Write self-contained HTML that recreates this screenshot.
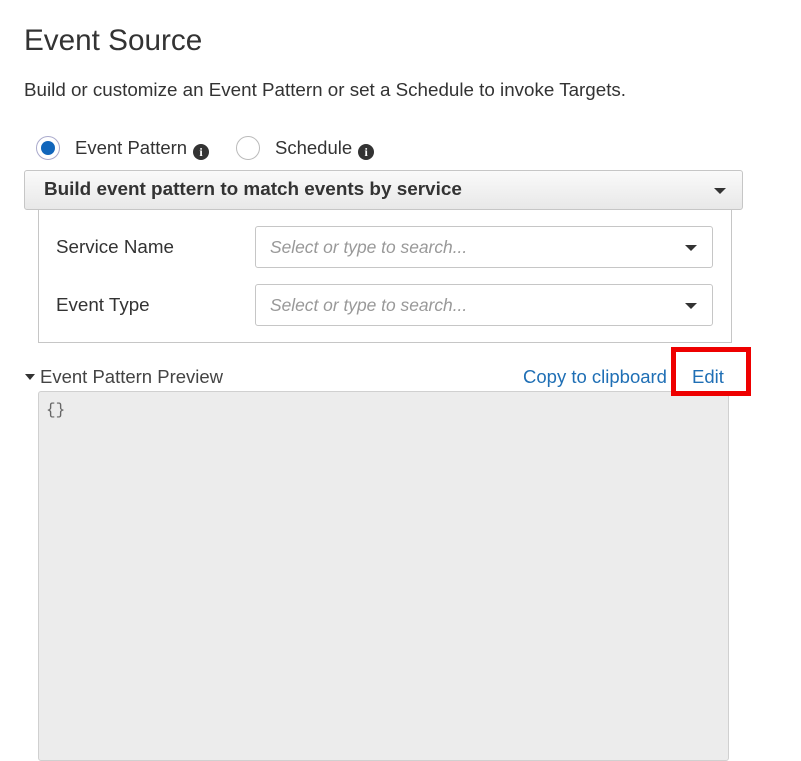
<!DOCTYPE html>
<html><head><style>
body{margin:0;width:801px;height:752px;overflow:hidden;background:#fff;font-family:"Liberation Sans",sans-serif;color:#444;position:relative}
.a{position:absolute;white-space:nowrap}
.info{display:inline-block;width:16px;height:16px;border-radius:50%;background:#333;color:#fff;font:bold 12px "Liberation Serif",serif;text-align:center;line-height:16px;vertical-align:-2px;margin-left:6px}
.radio{position:absolute;width:24px;height:24px;border-radius:50%;border:1px solid #bbb;box-sizing:border-box;background:#fff}
.sel{position:absolute;left:255px;width:458px;height:42px;border:1px solid #c6c6c6;border-radius:3px;box-sizing:border-box}
.sel span{position:absolute;left:14px;top:10px;font-style:italic;color:#999;font-size:17.4px}
.tri{position:absolute;width:0;height:0;border-left:6px solid transparent;border-right:6px solid transparent;border-top:6px solid #333}
</style></head><body>
<div class="a" style="left:24px;top:24px;font-size:29.7px;color:#333">Event Source</div>
<div class="a" style="left:24px;top:79px;font-size:18.8px;color:#333">Build or customize an Event Pattern or set a Schedule to invoke Targets.</div>
<div class="radio" style="left:36px;top:136px;border-color:#aac"><div style="position:absolute;left:4px;top:4px;width:14px;height:14px;border-radius:50%;background:#1166bb"></div></div>
<div class="a" style="left:75px;top:137px;font-size:18.5px;color:#333">Event Pattern<span class="info">i</span></div>
<div class="radio" style="left:236px;top:136px"></div>
<div class="a" style="left:275px;top:137px;font-size:18.5px;color:#333">Schedule<span class="info">i</span></div>
<div style="position:absolute;left:24px;top:170px;width:719px;height:40px;box-sizing:border-box;border:1px solid #c6c6c6;border-radius:3px;background:linear-gradient(#fafafa,#e8e8e8)"></div>
<div class="a" style="left:44px;top:179px;font-size:18.9px;font-weight:bold;color:#333">Build event pattern to match events by service</div>
<div class="tri" style="left:714px;top:188px"></div>
<div style="position:absolute;left:38px;top:209px;width:694px;height:134px;box-sizing:border-box;border:1px solid #c6c6c6;border-top:none"></div>
<div class="a" style="left:56px;top:236px;font-size:18.8px;color:#333">Service Name</div>
<div class="sel" style="top:226px"><span>Select or type to search...</span><div class="tri" style="left:429px;top:18px"></div></div>
<div class="a" style="left:56px;top:294px;font-size:18.8px;color:#333">Event Type</div>
<div class="sel" style="top:284px"><span>Select or type to search...</span><div class="tri" style="left:429px;top:18px"></div></div>
<div class="tri" style="left:25px;top:374px;border-left-width:5px;border-right-width:5px;border-top-width:6px"></div>
<div class="a" style="left:40px;top:366px;font-size:18.5px;color:#444">Event Pattern Preview</div>
<div class="a" style="left:523px;top:366px;font-size:18.5px;color:#1f6fb5">Copy to clipboard</div>
<div class="a" style="left:692px;top:366px;font-size:18.5px;color:#1f6fb5">Edit</div>
<div style="position:absolute;left:38px;top:391px;width:691px;height:370px;box-sizing:border-box;background:#ececec;border:1px solid #d0d0d0;border-radius:3px"></div>
<div style="position:absolute;left:671px;top:347px;width:80px;height:49px;box-sizing:border-box;border:5px solid #e00"></div>
<div class="a" style="left:46px;top:401px;font-size:16px;font-family:'Liberation Mono',monospace;color:#666">{}</div>
</body></html>
